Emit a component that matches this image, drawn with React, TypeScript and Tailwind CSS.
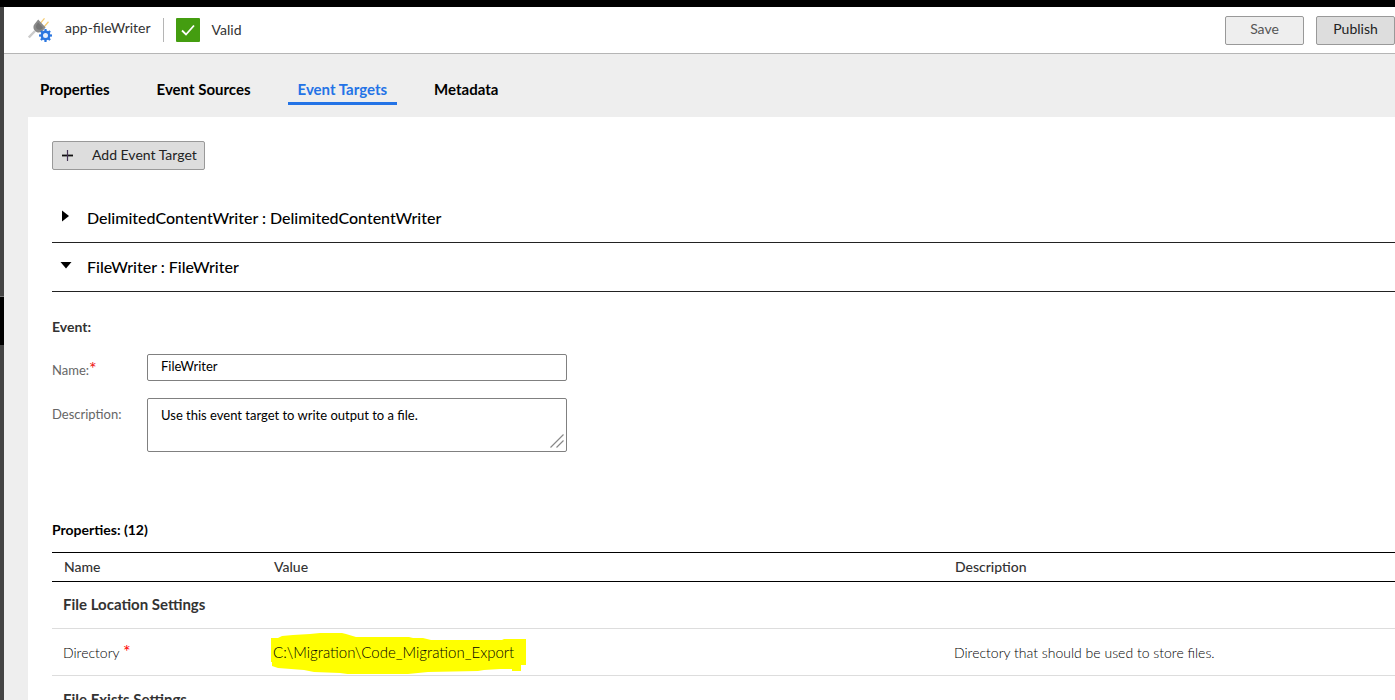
import { useState } from "react";

const tabs = ["Properties", "Event Sources", "Event Targets", "Metadata"];

const cogAngles = [0, 45, 90, 135, 180, 225, 270, 315];

function ConnectorIcon() {
  return (
    <svg width="26" height="26" viewBox="0 0 26 26" fill="none" aria-hidden="true">
      <path d="M.8 20.400 7 14" stroke="#cbcbcb" strokeWidth="2.400" />
      <path d="m12.300 6.300 4.200-5M16 10l4.500-5.200" stroke="#f5cd74" strokeWidth="1.300" />
      <path
        d="m10.200 2.600 7.400 8-2.600 3c-2 2.200-5.400 2.600-7.600.6-2.400-2-2.600-5.400-.4-7.600z"
        fill="#8a8a8a"
      />
      <path d="m10.300 5.600 4.700 5.200c-1.600 2.200-4.400 2.600-6 1.200-1.600-1.600-1.400-4 1.300-6.400z" fill="#757575" />
      <circle cx="17.500" cy="18.500" r="3.700" fill="#e6effc" stroke="#2a76e0" strokeWidth="2.400" />
      {cogAngles.map((angle) => (
        <rect
          key={angle}
          x="16.400"
          y="12"
          width="2.200"
          height="2.400"
          fill="#2a76e0"
          transform={`rotate(${angle} 17.5 18.5)`}
        />
      ))}
    </svg>
  );
}

function Header() {
  return (
    <header className="flex h-[47px] items-center border-b border-[#b5b5b5] bg-white pl-6 text-[#333]">
      <ConnectorIcon />
      <h1 className="ml-[11px] pb-1 text-sm">app-fileWriter</h1>
      <span className="ml-3 h-6 w-px bg-[#b5b5b5]" />
      <span className="ml-3 flex size-6 items-center justify-center rounded-[1px] bg-[#449d10]">
        <svg width="14" height="12" viewBox="0 0 14 12" fill="none" aria-hidden="true">
          <path d="m1 6.500 4 4L13 1.500" stroke="#fff" strokeWidth="1.800" />
        </svg>
      </span>
      <span className="ml-3 text-sm">Valid</span>
      <div className="ml-auto flex gap-3">
        <button disabled className="h-[29px] w-[79px] rounded-[2px] border border-[#999] bg-[#eee] pb-[3px] text-sm text-[#555]">
          Save
        </button>
        <button className="h-[29px] w-[79px] rounded-[2px] border border-[#999] bg-[#ddd] pb-[3px] text-sm text-[#222]">
          Publish
        </button>
      </div>
    </header>
  );
}

function Tabs() {
  const [active, setActive] = useState("Event Targets");
  return (
    <nav className="flex h-[63px] items-end gap-[27px] bg-[#eee] pb-3 pl-[26px]">
      {tabs.map((tab) => (
        <button
          key={tab}
          onClick={() => setActive(tab)}
          className={
            active === tab
              ? "h-[30px] border-b-3 border-[#2373e6] px-[10px] pt-[2px] text-[15px] font-bold text-[#2373e6]"
              : "h-[30px] border-b-3 border-transparent px-[10px] pt-[2px] text-[15px] font-bold text-black"
          }
        >
          {tab}
        </button>
      ))}
    </nav>
  );
}

function SectionToggle({ title, open, onToggle }: { title: string; open: boolean; onToggle: () => void }) {
  return (
    <h2 className="border-b border-[#222]">
      <button
        onClick={onToggle}
        aria-expanded={open}
        className="flex h-12 w-full items-center pl-2 text-base font-medium text-black"
      >
        <svg width="12" height="12" viewBox="0 0 12 12" className="mb-1" aria-hidden="true">
          <path d={open ? "M.500 3h11L6 9.500z" : "M2 .5v11L9 6z"} fill="#000" />
        </svg>
        <span className="ml-[15px]">{title}</span>
      </button>
    </h2>
  );
}

function EventForm() {
  return (
    <form className="mt-[25px] text-[13px] leading-5">
      <h3 className="text-sm leading-5 font-bold text-[#333]">Event:</h3>
      <div className="mt-[17px] flex">
        <label htmlFor="event-name" className="w-[95px] pt-[5px] text-[#666]">
          Name:<span className="text-lg leading-none text-[#e11]">*</span>
        </label>
        <input
          id="event-name"
          defaultValue="FileWriter"
          className="h-[27px] w-[420px] rounded-[2px] border border-[#808080] px-[13px] pb-[3px] text-black"
        />
      </div>
      <div className="mt-[17px] flex">
        <label htmlFor="event-description" className="w-[95px] pt-[6px] text-[#666]">
          Description:
        </label>
        <div className="relative w-[420px]">
          <textarea
            id="event-description"
            defaultValue="Use this event target to write output to a file."
            className="block h-[54px] w-full resize-none rounded-[2px] border border-[#808080] px-[13px] py-[6px] text-black"
          />
          <svg width="14" height="14" viewBox="0 0 14 14" className="absolute right-[3px] bottom-1" aria-hidden="true">
            <path d="M.5 13.500 13.500.5M6.500 13.500l7-7" stroke="#888" strokeWidth="1.200" fill="none" />
          </svg>
        </div>
      </div>
    </form>
  );
}

function PropertiesTable() {
  return (
    <section className="mt-[68px]">
      <h3 className="text-sm leading-5 font-bold text-black">Properties: (12)</h3>
      <table className="mt-3 w-full table-fixed border-collapse text-left text-sm text-[#333]">
        <thead>
          <tr className="h-[29px] border-y border-black">
            <th className="w-[210px] px-3 font-medium">Name</th>
            <th className="w-[681px] px-3 font-medium">Value</th>
            <th className="px-3 font-medium">Description</th>
          </tr>
        </thead>
        <tbody>
          <tr className="h-[47px] border-b border-[#ddd]">
            <th colSpan={3} className="px-[11px] text-[15px] font-bold">File Location Settings</th>
          </tr>
          <tr className="h-[47px] border-b border-[#ddd] font-light text-black">
            <td className="px-[11px]">
              Directory <span className="text-lg leading-none font-normal text-[#f00]">*</span>
            </td>
            <td className="px-[11px] pt-[2px] text-[15px]">
              <span className="relative isolate">
                <svg
                  width="256"
                  height="42"
                  viewBox="0 0 256 42"
                  className="absolute -top-[11px] -left-[3px] -z-10"
                  aria-hidden="true"
                >
                  <path
                    d="M1 6h7l4-2 11-1 17-1L50 1h22l4 1 10 3h53l4 1h10l8 2h71l2-1h22v26h-5v6h-9v-2h-12l-16 1-6 1-50 1-20 2-10 1H85l-15-2-26-1-10-2-26-2-6-2v-4H1z"
                    fill="#ff0"
                  />
                </svg>
                C:\Migration\Code_Migration_Export
              </span>
            </td>
            <td className="px-[11px] pt-[2px]">Directory that should be used to store files.</td>
          </tr>
          <tr className="h-[47px] border-b border-[#ddd]">
            <th colSpan={3} className="px-[11px] pt-[2px] text-[15px] font-bold">File Exists Settings</th>
          </tr>
        </tbody>
      </table>
    </section>
  );
}

export default function App() {
  const [writerOpen, setWriterOpen] = useState(false);
  const [fileOpen, setFileOpen] = useState(true);
  return (
    <div className="flex h-screen flex-col overflow-hidden bg-white font-[Lato,sans-serif]">
      <div className="h-[7px] shrink-0 bg-black" />
      <div className="flex min-h-0 flex-1">
        <aside className="w-1 shrink-0 bg-[#444]">
          <div className="mt-[289px] h-[49px] border-t border-[#777] bg-black" />
        </aside>
        <div className="flex min-w-0 flex-1 flex-col">
          <Header />
          <Tabs />
          <div className="flex min-h-0 flex-1 bg-[#eee] pl-6">
            <main className="min-w-0 flex-1 overflow-hidden bg-white pt-6 pl-6">
              <button className="flex h-[29px] items-center rounded-[2px] border border-[#999] bg-[#ddd] px-[7px] text-sm text-[#222]">
                <svg width="15" height="15" viewBox="0 0 15 15" aria-hidden="true">
                  <path d="M2 7.500h11" stroke="#111" strokeWidth="1.800" />
                  <path d="M7.500 2v11" stroke="#435" strokeWidth="1.200" />
                </svg>
                <span className="ml-[17px] pb-[2px]">Add Event Target</span>
              </button>
              <div className="mt-6">
                <SectionToggle
                  title="DelimitedContentWriter : DelimitedContentWriter"
                  open={writerOpen}
                  onToggle={() => setWriterOpen(!writerOpen)}
                />
                <SectionToggle title="FileWriter : FileWriter" open={fileOpen} onToggle={() => setFileOpen(!fileOpen)} />
              </div>
              {fileOpen && (
                <>
                  <EventForm />
                  <PropertiesTable />
                </>
              )}
            </main>
          </div>
        </div>
      </div>
    </div>
  );
}
